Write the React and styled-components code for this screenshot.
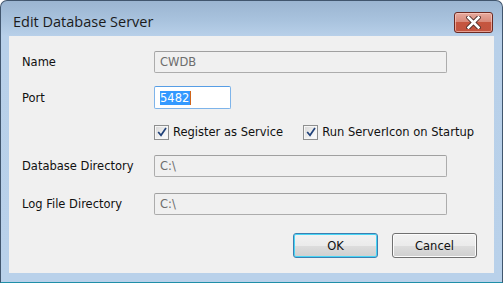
import React from "react";
import styled, { createGlobalStyle } from "styled-components";

const GlobalStyle = createGlobalStyle`
  html, body {
    margin: 0;
    padding: 0;
    background: #ffffff;
  }
  body {
    font-family: "DejaVu Sans", "Liberation Sans", sans-serif;
  }
`;

const Window = styled.div`
  width: 503px;
  height: 283px;
  box-sizing: border-box;
  border: 1px solid #41566e;
  border-bottom-color: #1f8fa8;
  border-radius: 7px 7px 0 0;
  background: linear-gradient(to bottom, #9bb5d1 0px, #a9c3de 20px, #b8d0e9 35px, #b9d1ea 100%);
  display: flex;
  flex-direction: column;
  overflow: hidden;
`;

const TitleBar = styled.div`
  height: 35px;
  display: flex;
  align-items: flex-start;
  justify-content: space-between;
  padding: 0 9px 0 12px;
`;

const Title = styled.div`
  font-family: "Open Sans", "Noto Sans", sans-serif;
  font-size: 14.5px;
  color: #1b1b1b;
  margin-top: 12px;
  line-height: 18px;
`;

const CloseButton = styled.div`
  width: 39px;
  height: 21px;
  margin-top: 11px;
  box-sizing: border-box;
  border: 1px solid #6c2a22;
  border-radius: 3px;
  background: linear-gradient(to bottom, #e6aa9e 0%, #d98a7b 45%, #c5553f 50%, #c25440 100%);
  box-shadow: inset 0 0 0 1px rgba(255, 210, 200, 0.6);
  display: flex;
  align-items: center;
  justify-content: center;
`;

const Frame = styled.div`
  flex: 1;
  padding: 0 8px 9px 8px;
  display: flex;
`;

const Client = styled.div`
  flex: 1;
  background: #f0f0f0;
  padding: 15px 0 0 13px;
  display: flex;
  flex-direction: column;
  font-size: 11.5px;
  color: #111;
`;

const Row = styled.div`
  display: grid;
  grid-template-columns: 132px auto;
  align-items: center;
  height: ${(p) => p.$h || 22}px;
  margin-top: ${(p) => p.$mt || 0}px;
`;

const Label = styled.div`
  font-size: 11.5px;
`;

const Field = styled.div`
  box-sizing: border-box;
  width: ${(p) => p.$w || 293}px;
  height: ${(p) => p.$h || 22}px;
  border: 1px solid ${(p) => (p.$active ? "#7eb4ea" : "#acacac")};
  border-top-color: ${(p) => (p.$active ? "#569de5" : "#a0a0a0")};
  border-radius: 2px;
  background: ${(p) => (p.$active ? "#ffffff" : "#f0f0f0")};
  color: #6d6d6d;
  padding-left: 5px;
  display: flex;
  align-items: center;
`;

const Selected = styled.span`
  background: #3399ff;
  color: #ffffff;
  line-height: 14px;
  padding: 0 1px 0 0;
  border-right: 1px solid #d0641a;
`;

const Checks = styled.div`
  display: flex;
  align-items: center;
  gap: 20px;
`;

const CheckItem = styled.label`
  display: flex;
  align-items: center;
  gap: 4px;
`;

const Box = styled.span`
  width: 15px;
  height: 15px;
  box-sizing: border-box;
  border: 1px solid #8e8f8f;
  background: linear-gradient(135deg, #d6d6d6 0%, #f2f2f2 60%, #ffffff 100%);
  box-shadow: inset 0 0 0 1px #f6f6f6;
  display: flex;
  align-items: center;
  justify-content: center;
`;

const Buttons = styled.div`
  display: flex;
  justify-content: flex-end;
  gap: 14px;
  margin-top: 18px;
  padding-right: 17px;
`;

const Button = styled.div`
  width: 85px;
  height: 25px;
  box-sizing: border-box;
  border: 1px solid ${(p) => (p.$default ? "#3c7fb1" : "#707070")};
  border-radius: 3px;
  background: linear-gradient(to bottom, #f2f2f2 0%, #ebebeb 50%, #dddddd 51%, #cfcfcf 100%);
  box-shadow: inset 0 0 0 1px ${(p) => (p.$default ? "#48d5f5" : "#fcfcfc")};
  display: flex;
  align-items: center;
  justify-content: center;
  font-size: 11.5px;
  color: #111;
`;

function Check() {
  return (
    <Box>
      <svg width="10" height="10" viewBox="0 0 10 10">
        <path d="M1.2 5 L4 8.3 L9 1" fill="none" stroke="#21427a" strokeWidth="1.7" />
      </svg>
    </Box>
  );
}

export default function App() {
  return (
    <>
      <GlobalStyle />
      <Window>
        <TitleBar>
          <Title>Edit Database Server</Title>
          <CloseButton>
            <svg width="15" height="13" viewBox="0 0 15 13">
              <path d="M2.5 1.5 L12.5 11.5 M12.5 1.5 L2.5 11.5" stroke="#4a2a26" strokeWidth="4.4" strokeLinecap="square" />
              <path d="M2.5 1.5 L12.5 11.5 M12.5 1.5 L2.5 11.5" stroke="#ffffff" strokeWidth="2.6" strokeLinecap="square" />
            </svg>
          </CloseButton>
        </TitleBar>
        <Frame>
          <Client>
            <Row>
              <Label>Name</Label>
              <Field>CWDB</Field>
            </Row>
            <Row $mt={13} $h={23}>
              <Label>Port</Label>
              <Field $w={77} $h={23} $active>
                <Selected>5482</Selected>
              </Field>
            </Row>
            <Row $mt={15} $h={16}>
              <span />
              <Checks>
                <CheckItem>
                  <Check />
                  Register as Service
                </CheckItem>
                <CheckItem>
                  <Check />
                  Run ServerIcon on Startup
                </CheckItem>
              </Checks>
            </Row>
            <Row $mt={15}>
              <Label>Database Directory</Label>
              <Field>C:\</Field>
            </Row>
            <Row $mt={16}>
              <Label>Log File Directory</Label>
              <Field>C:\</Field>
            </Row>
            <Buttons>
              <Button $default>OK</Button>
              <Button>Cancel</Button>
            </Buttons>
          </Client>
        </Frame>
      </Window>
    </>
  );
}
